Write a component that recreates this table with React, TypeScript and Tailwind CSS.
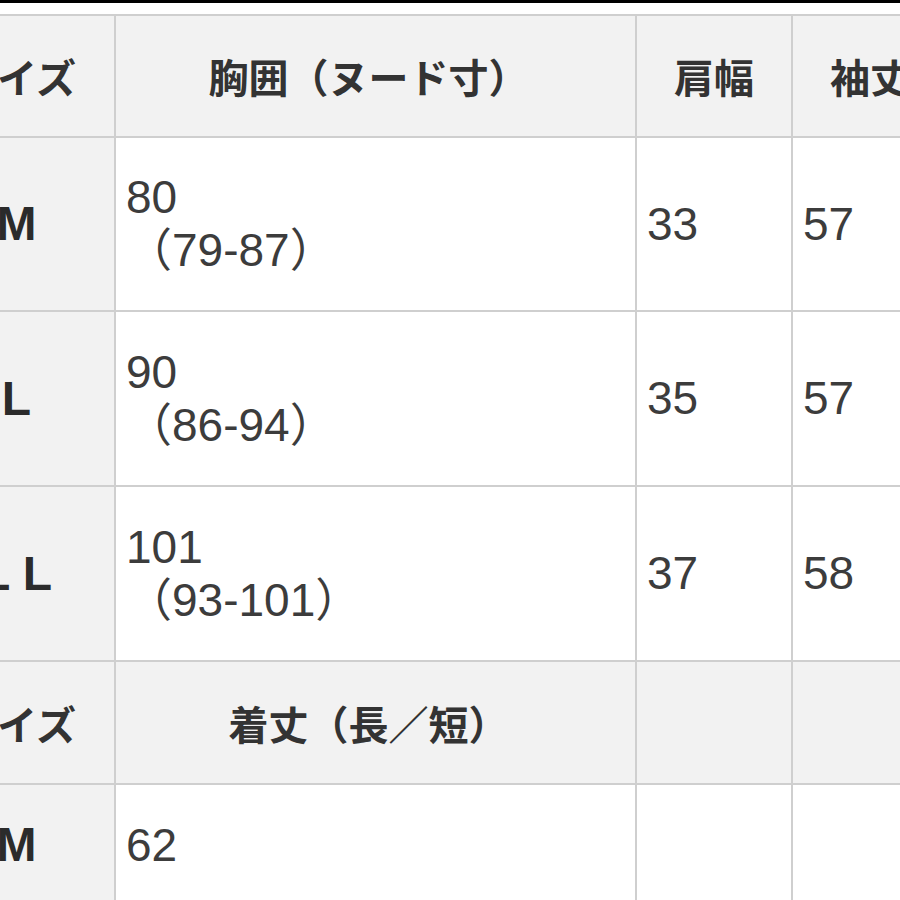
const rows = [
  { size: 'M', chest: '80', range: '（79-87）', shoulder: '33', sleeve: '57' },
  { size: 'L', chest: '90', range: '（86-94）', shoulder: '35', sleeve: '57' },
  { size: 'L L', chest: '101', range: '（93-101）', shoulder: '37', sleeve: '58' },
];

const headFont = { fontFamily: '"Noto Sans CJK JP", sans-serif' };
const bodyFont = { fontFamily: '"Liberation Sans", "Noto Sans CJK JP", sans-serif' };

function HeadCell({ children, shift = false }: { children?: React.ReactNode; shift?: boolean }) {
  return (
    <div
      className={`bg-[#f2f2f2] flex items-center justify-center font-bold text-[40px] text-[#333] whitespace-nowrap ${shift ? 'pr-[14px]' : ''}`}
      style={headFont}
    >
      {children}
    </div>
  );
}

function SizeCell({ children }: { children: React.ReactNode }) {
  return (
    <div
      className="bg-[#f2f2f2] flex items-center justify-center font-bold text-[48px] text-[#2b2b2b] whitespace-nowrap"
      style={bodyFont}
    >
      {children}
    </div>
  );
}

function BodyCell({ children }: { children?: React.ReactNode }) {
  return (
    <div
      className="bg-white flex flex-col justify-center pl-[10px] text-[46px] leading-[53px] text-[#3c3c3c] whitespace-nowrap"
      style={bodyFont}
    >
      {children}
    </div>
  );
}

export default function App() {
  return (
    <div className="w-[900px] h-[900px] overflow-hidden bg-white">
      <div className="h-[3px] bg-black" />
      <div className="h-[11px]" />
      <div className="-ml-[83px] w-[1032px] grid grid-cols-[195px_519px_154px_154px] grid-rows-[120px_172px_173px_173px_121px_120px] gap-[2px] p-[2px] bg-[#cfcfcf]">
        <HeadCell>サイズ</HeadCell>
        <HeadCell shift>胸囲（ヌード寸）</HeadCell>
        <HeadCell>肩幅</HeadCell>
        <HeadCell>袖丈</HeadCell>

        {rows.map((r) => (
          <>
            <SizeCell key={r.size + 's'}>{r.size}</SizeCell>
            <BodyCell key={r.size + 'c'}>
              <span>{r.chest}</span>
              <span>{r.range}</span>
            </BodyCell>
            <BodyCell key={r.size + 'sh'}>{r.shoulder}</BodyCell>
            <BodyCell key={r.size + 'sl'}>{r.sleeve}</BodyCell>
          </>
        ))}

        <HeadCell>サイズ</HeadCell>
        <HeadCell shift>着丈（長／短）</HeadCell>
        <HeadCell />
        <HeadCell />

        <SizeCell>M</SizeCell>
        <BodyCell>62</BodyCell>
        <BodyCell />
        <BodyCell />
      </div>
    </div>
  );
}
